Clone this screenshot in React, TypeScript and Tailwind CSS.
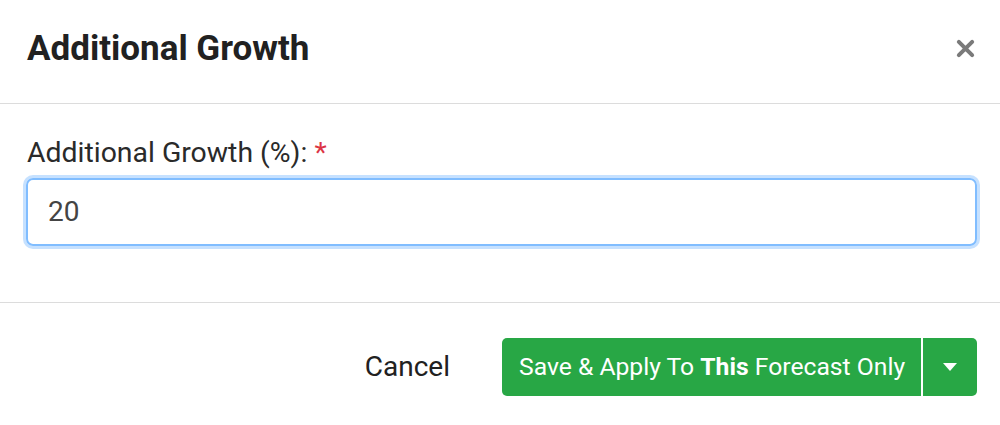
import React from 'react';

const App: React.FC = () => {
  return (
    <div className="w-[1000px] h-[425px] bg-white font-['Roboto',sans-serif] flex flex-col overflow-hidden">
      {/* Header */}
      <div className="h-[104px] shrink-0 flex items-center justify-between pl-[27px] pr-[24px] border-b border-[#dcdcdc]">
        <h1 className="text-[35px] leading-[40px] font-bold text-[#212121] pb-[6px]">Additional Growth</h1>
        <button className="text-[#7a7a7a] w-[22px] h-[22px] flex items-center justify-center mb-[6px]">
          <svg width="19" height="19" viewBox="0 0 20 20">
            <path d="M3 3 L17 17 M17 3 L3 17" stroke="currentColor" strokeWidth="4.2" strokeLinecap="round" />
          </svg>
        </button>
      </div>

      {/* Body */}
      <div className="h-[199px] shrink-0 px-[26px] pt-[33px] border-b border-[#dcdcdc]">
        <label className="block text-[28.4px] leading-[32px] text-[#2a2a2a] pl-[1px]">
          Additional Growth (%): <span className="text-[#dc3545]">*</span>
        </label>
        <div className="mt-[9px] h-[68px] w-[951px] rounded-[7px] border-[2px] border-[#80bdff] shadow-[0_0_0_3px_rgba(128,189,255,0.45)] flex items-center px-[20px]">
          <span className="text-[28px] text-[#444]">20</span>
        </div>
      </div>

      {/* Footer */}
      <div className="flex-1 flex items-start justify-end pr-[23px] pt-[35px]">
        <button className="h-[58px] mr-[52px] text-[28px] text-[#212121] flex items-center">Cancel</button>
        <div className="h-[58px] w-[475px] rounded-[5px] bg-[#28a745] flex text-white">
          <div className="flex-1 flex items-center pl-[17px] text-[24.7px] border-r-[2px] border-white">
            Save &amp; Apply To&nbsp;<b className="font-bold">This</b>&nbsp;Forecast Only
          </div>
          <div className="w-[54px] flex items-center justify-center">
            <svg width="16" height="10" viewBox="0 0 16 10">
              <path d="M1 1 L15 1 L8 9 Z" fill="white" />
            </svg>
          </div>
        </div>
      </div>
    </div>
  );
};

export default App;
